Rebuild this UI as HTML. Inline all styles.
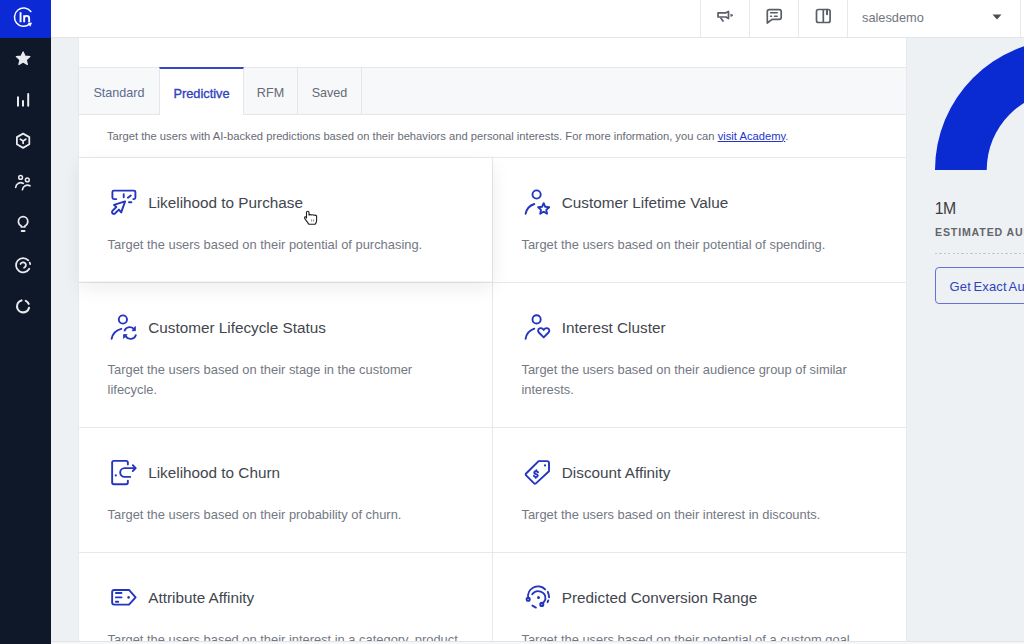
<!DOCTYPE html>
<html><head><meta charset="utf-8">
<style>
*{box-sizing:border-box;margin:0;padding:0}
html,body{width:1024px;height:644px;overflow:hidden;background:#eef1f3;font-family:"Liberation Sans",sans-serif}
.abs{position:absolute}
#side{left:0;top:0;width:51px;height:644px;background:#0f1828}
#logo{left:0;top:0;width:51px;height:38px;background:#0b2ad6}
#top{left:51px;top:0;width:973px;height:38px;background:#fff;border-bottom:1px solid #e3e5e9}
.vb{top:0;width:1px;height:37px;background:#e6e8eb}
#panel{left:79px;top:38px;width:827px;height:603px;background:#fff;overflow:hidden}
#pl{left:78px;top:38px;width:1px;height:603px;background:#e6e8eb}
#pr{left:906px;top:38px;width:1px;height:603px;background:#e8eaed}
#tabs{left:0;top:29px;width:827px;height:48px;background:#f7f8fa;border-top:1px solid #e4e6ea;border-bottom:1px solid #e4e6ea}
.tab{top:0;height:46px;font-size:12.6px;color:#5c6b8c;line-height:51px;text-align:center;border-right:1px solid #e4e6ea}
.tab.act{background:#fff;color:#3142bd;font-weight:normal;font-size:12.8px;-webkit-text-stroke:0.35px #3142bd;border-top:2px solid #3848c4;top:-1px;height:48px;line-height:50px;border-left:1px solid #e4e6ea}
#info{left:28px;top:90.8px;font-size:11.2px;line-height:14px;color:#676b74;white-space:nowrap}
#info a{color:#2235c8;text-decoration:underline}
.hl{left:0;width:827px;height:1px;background:#e6e8eb}
.vl{left:413px;width:1px;background:#e6e8eb}
.ic{position:absolute}
.ttl{position:absolute;font-size:15.3px;line-height:20px;color:#42464e;white-space:nowrap}
.dsc{position:absolute;font-size:12.9px;color:#737883;line-height:20px;white-space:nowrap}
#hov{left:0;top:120px;width:413px;height:123px;background:#fff;box-shadow:0 7px 18px rgba(20,30,50,0.08)}
#right{left:907px;top:38px;width:117px;height:603px;background:#eef1f3}
#bot{left:51px;top:641px;width:973px;height:3px;background:#f6f7f9;border-top:1px solid #e0e3e7}
</style></head><body>
<div id="side" class="abs"></div>
<div id="logo" class="abs">
<svg width="51" height="38" viewBox="0 0 51 38" style="position:absolute;left:0;top:0">
<path d="M30.85 11.55 A9.15 9.15 0 1 0 29.5 24.2" fill="none" stroke="#fff" stroke-width="1.5" stroke-linecap="round"/>
<path d="M28.3 23.1 L31.6 22.9 L30.2 26.3 Z" fill="#fff" stroke="#fff" stroke-width="0.6" stroke-linejoin="round"/>
<path d="M20.55 12.2 V22.2 M24.15 22.2 V15.2 M24.15 18.4 A2.5 2.5 0 0 1 29.15 18.4 V22.2" fill="none" stroke="#fff" stroke-width="1.9"/>
</svg>
</div>
<svg class="abs" style="left:0;top:38px" width="51" height="290" viewBox="0 38 51 290">
<g fill="none" stroke="#e8eaf0" stroke-linecap="round" stroke-linejoin="round">
<path fill="#e8eaf0" stroke-width="1.2" d="M23.1 51.9 L25.05 56.05 L29.9 56.6 L26.3 59.75 L27.3 64.5 L23.1 62.1 L18.9 64.5 L19.9 59.75 L16.3 56.6 L21.15 56.05 Z"/>
<path stroke-width="2" d="M18 97.2 V105.8 M23 101.1 V105.8 M28.2 94 V105.8"/>
<path stroke-width="1.8" d="M23.1 133.6 L29.3 137.1 V144.3 L23.1 147.9 L16.9 144.3 V137.1 Z"/>
<path stroke-width="1.8" d="M20.4 139.3 L23.1 140.9 L25.8 139.3 M23.1 140.9 V143.3"/>
<circle stroke-width="1.5" cx="20.6" cy="177.45" r="1.9"/>
<circle stroke-width="1.5" cx="27.3" cy="179.9" r="1.9"/>
<path stroke-width="1.7" d="M15.75 187.3 A5 5 0 0 1 23.3 183.4 M22.45 189.75 A5 5 0 0 1 30.0 185.85"/>
<path stroke-width="1.7" d="M21.3 227 V226 Q18.4 224.3 18.4 221.4 A4.7 4.7 0 0 1 27.8 221.4 Q27.8 224.3 24.9 226 V227 Z"/>
<path stroke-width="1.8" d="M21.6 231 H24.6"/>
<path stroke-width="1.8" d="M28.33 260.40 A7.1 7.1 0 1 0 29.27 268.71 M29.73 262.66 A7.1 7.1 0 0 1 30.10 264.04"/>
<path stroke-width="1.8" d="M20.54 263.96 A2.8 2.8 0 1 1 24.06 267.73"/>
<path stroke-width="2.1" d="M21.52 300.41 A6.1 6.1 0 1 0 28.99 307.88 M25.77 300.82 A6.1 6.1 0 0 1 28.69 303.86"/>
</g>
</svg>
<div id="top" class="abs">
<div class="vb abs" style="left:649px"></div>
<div class="vb abs" style="left:698px"></div>
<div class="vb abs" style="left:747px"></div>
<div class="vb abs" style="left:796px"></div>
<div class="vb abs" style="left:969px"></div>
<div class="abs" style="left:811px;top:10px;font-size:12.8px;color:#72757d">salesdemo</div>
<svg class="abs" style="left:649px;top:0" width="200" height="37" viewBox="700 0 200 37">
<g fill="none" stroke="#5a5e68" stroke-width="1.7" stroke-linecap="round" stroke-linejoin="round">
<path d="M718 12.8 H726 L728.5 11.5 V18.6 L726 17 H718 Z"/>
<path d="M721 18.2 L723 21"/>
<path d="M731.2 14.3 L733 15.3 L731.2 16.3 Z" fill="#5a5e68" stroke-width="0.8"/>
<path d="M767.3 23 V11.7 Q767.3 9.7 769.3 9.7 H779.2 Q781.2 9.7 781.2 11.7 V17.3 Q781.2 19.3 779.2 19.3 H772 Z"/>
<path d="M770.6 12.7 H777.2 M770.6 16.3 H771.5 M774.5 16.3 H777.2" stroke-width="1.6"/>
<path d="M816.5 11.5 Q816.5 9.5 818.5 9.5 H823.3 V22.5 H818.5 Q816.5 22.5 816.5 20.5 Z M823.3 9.5 H828.1 Q830.1 9.5 830.1 11.5 V20.5 Q830.1 22.5 828.1 22.5 H823.3"/>
<path d="M827 9.8 V14.3" stroke-width="2"/>
</g>
</svg>
<svg class="abs" style="left:941px;top:14px" width="10" height="6"><path d="M0.5 0.5 L9.5 0.5 L5 5.5Z" fill="#4a4e57"/></svg>
</div>
<div class="abs" style="left:79px;top:158px;width:413px;height:123px;background:#fff;box-shadow:0 7px 18px rgba(20,30,50,0.07)"></div>
<div id="panel" class="abs">
<div id="tabs" class="abs">
<div class="tab abs" style="left:0;width:81px">Standard</div>
<div class="tab abs act" style="left:80px;width:85px">Predictive</div>
<div class="tab abs" style="left:165px;width:54px;color:#666a73">RFM</div>
<div class="tab abs" style="left:219px;width:64px;color:#666a73">Saved</div>
</div>
<div id="info" class="abs">Target the users with AI-backed predictions based on their behaviors and personal interests. For more information, you can <a>visit Academy</a>.</div>
<div class="hl abs" style="top:119px"></div>
<div class="hl abs" style="top:244px"></div>
<div class="hl abs" style="top:389px"></div>
<div class="hl abs" style="top:514px"></div>
<div class="vl abs" style="top:119px;height:500px"></div>
<div id="hov" class="abs"></div>
<svg class="ic" style="left:27px;top:147px" width="36" height="35" viewBox="0 0 36 35"><path fill="none" stroke="#2435c0" stroke-width="1.9" stroke-linecap="round" stroke-linejoin="round" d="M10.3 14.1 H7.9 Q6.4 14.1 6.4 12.6 V7.1 Q6.4 5.6 7.9 5.6 H27.9 Q29.4 5.6 29.4 7.1 V12.6 Q29.4 14.1 27.9 14.1 H27.3"/>
<path fill="none" stroke="#2435c0" stroke-width="1.9" stroke-linecap="round" stroke-linejoin="round" d="M17.7 9.3 V12.2 M21.9 12.7 L24.8 10.5 M23 17.3 H25.4"/>
<path fill="none" stroke="#2435c0" stroke-width="1.9" stroke-linecap="round" stroke-linejoin="round" d="M19.1 16.4 L8.0 19.9 L10.3 22.0 L6.2 26.1 Q5.5 27.6 6.9 28.7 Q8 29.3 8.9 28.5 L12.9 24.6 L15.2 27.4 Z"/></svg>
<div class="ttl" style="left:69.2px;top:154.6px">Likelihood to Purchase</div>
<div class="dsc" style="left:28.6px;top:196.5px">Target the users based on their potential of purchasing.</div>
<svg class="ic" style="left:441px;top:147px" width="36" height="35" viewBox="0 0 36 35"><circle fill="none" stroke="#2435c0" stroke-width="1.9" stroke-linecap="round" stroke-linejoin="round" cx="16.6" cy="9.5" r="4.1"/><path fill="none" stroke="#2435c0" stroke-width="1.9" stroke-linecap="round" stroke-linejoin="round" d="M5.6 28.8 A13 13 0 0 1 14.3 19.0"/><path fill="none" stroke="#2435c0" stroke-width="1.9" stroke-linecap="round" stroke-linejoin="round" d="M23.65 18.20 L25.27 21.78 L29.17 22.21 L26.27 24.85 L27.06 28.69 L23.65 26.75 L20.24 28.69 L21.03 24.85 L18.13 22.21 L22.03 21.78 Z"/></svg>
<div class="ttl" style="left:482.8px;top:154.6px">Customer Lifetime Value</div>
<div class="dsc" style="left:442.5px;top:196.5px">Target the users based on their potential of spending.</div>
<svg class="ic" style="left:27px;top:272px" width="36" height="35" viewBox="0 0 36 35"><circle fill="none" stroke="#2435c0" stroke-width="1.9" stroke-linecap="round" stroke-linejoin="round" cx="16.9" cy="9.5" r="4.1"/><path fill="none" stroke="#2435c0" stroke-width="1.9" stroke-linecap="round" stroke-linejoin="round" d="M5.6 28.8 A13 13 0 0 1 15.3 18.8"/><path fill="none" stroke="#2435c0" stroke-width="1.9" stroke-linecap="round" stroke-linejoin="round" d="M18.6 20.5 A5.6 5.6 0 0 1 28.4 19.6"/>
<path fill="#2435c0" stroke="#2435c0" stroke-width="0.8" stroke-linejoin="round" d="M29.4 16.4 L29.4 20.7 L26.1 20.7 Z"/>
<path fill="none" stroke="#2435c0" stroke-width="1.9" stroke-linecap="round" stroke-linejoin="round" d="M29.8 25.2 A5.6 5.6 0 0 1 20.0 26.6"/>
<path fill="#2435c0" stroke="#2435c0" stroke-width="0.8" stroke-linejoin="round" d="M17.5 24.6 L17.5 28.4 L21.1 24.6 Z"/></svg>
<div class="ttl" style="left:69.2px;top:279.6px">Customer Lifecycle Status</div>
<div class="dsc" style="left:28.6px;top:321.5px">Target the users based on their stage in the customer<br>lifecycle.</div>
<svg class="ic" style="left:441px;top:272px" width="36" height="35" viewBox="0 0 36 35"><circle fill="none" stroke="#2435c0" stroke-width="1.9" stroke-linecap="round" stroke-linejoin="round" cx="16.6" cy="9.4" r="4.1"/><path fill="none" stroke="#2435c0" stroke-width="1.9" stroke-linecap="round" stroke-linejoin="round" d="M5.6 28.8 A13 13 0 0 1 14.3 18.7"/><path fill="none" stroke="#2435c0" stroke-width="1.9" stroke-linecap="round" stroke-linejoin="round" d="M23.7 27.4 L18.9 22.5 Q17.4 20.8 18.5 19.2 Q19.9 17.6 22 18.3 Q23.2 18.8 23.7 20 Q24.2 18.8 25.4 18.3 Q27.5 17.6 28.9 19.2 Q30 20.8 28.5 22.5 Z"/></svg>
<div class="ttl" style="left:482.8px;top:279.6px">Interest Cluster</div>
<div class="dsc" style="left:442.5px;top:321.5px">Target the users based on their audience group of similar<br>interests.</div>
<svg class="ic" style="left:27px;top:417px" width="36" height="35" viewBox="0 0 36 35"><path fill="none" stroke="#2435c0" stroke-width="1.9" stroke-linecap="round" stroke-linejoin="round" d="M21.85 9.5 V7.6 Q21.85 5.85 20.1 5.85 H7.9 Q6.15 5.85 6.15 7.6 V27.5 Q6.15 29.25 7.9 29.25 H20.1 Q21.85 29.25 21.85 27.5 V25.6"/>
<circle cx="9.8" cy="20.4" r="1.1" fill="#2435c0"/>
<path fill="none" stroke="#2435c0" stroke-width="1.9" stroke-linecap="round" stroke-linejoin="round" d="M24.2 21.9 H18.6 A4.4 4.4 0 0 1 18.6 13.1 H29.6 M26.8 10.2 L29.7 13.1 L26.8 16.0"/></svg>
<div class="ttl" style="left:69.2px;top:424.6px">Likelihood to Churn</div>
<div class="dsc" style="left:28.6px;top:466.5px">Target the users based on their probability of churn.</div>
<svg class="ic" style="left:441px;top:417px" width="36" height="35" viewBox="0 0 36 35"><path fill="none" stroke="#2435c0" stroke-width="1.9" stroke-linecap="round" stroke-linejoin="round" d="M18.6 6.1 H27 Q29 6.1 29 8.1 V16.2 L15.9 28.4 Q15 29.3 14.1 28.4 L6.1 20.3 Q5.2 19.4 6.1 18.5 Z"/>
<circle cx="25" cy="10.4" r="1.1" fill="#2435c0"/>
<g transform="translate(16 19.1) rotate(5)"><path fill="none" stroke="#2435c0" stroke-width="1.9" stroke-linecap="round" stroke-linejoin="round" stroke-width="1.8" d="M1.9 -1.9 Q1.5 -2.85 0 -2.85 Q-1.9 -2.85 -1.9 -1.45 Q-1.9 -0.25 0 0 Q1.95 0.25 1.95 1.5 Q1.95 2.85 0 2.85 Q-1.6 2.85 -2.0 1.9 M0 -2.85 V-3.8 M0 2.85 V3.8"/></g></svg>
<div class="ttl" style="left:482.8px;top:424.6px">Discount Affinity</div>
<div class="dsc" style="left:442.5px;top:466.5px">Target the users based on their interest in discounts.</div>
<svg class="ic" style="left:27px;top:542px" width="36" height="35" viewBox="0 0 36 35"><path fill="none" stroke="#2435c0" stroke-width="1.9" stroke-linecap="round" stroke-linejoin="round" d="M8.2 9.95 H23 L29.6 17.3 L23 24.65 H8.2 Q6.15 24.65 6.15 22.6 V12 Q6.15 9.95 8.2 9.95 Z"/>
<path fill="none" stroke="#2435c0" stroke-width="1.9" stroke-linecap="round" stroke-linejoin="round" d="M9.9 13.05 H15.5 M9.9 17.4 H15.5 M9.9 21.75 H12.2"/>
<circle cx="22.6" cy="17.4" r="1.3" fill="#2435c0"/></svg>
<div class="ttl" style="left:69.2px;top:549.6px">Attribute Affinity</div>
<div class="dsc" style="left:28.6px;top:591.5px">Target the users based on their interest in a category, product</div>
<svg class="ic" style="left:441px;top:542px" width="36" height="35" viewBox="0 0 36 35"><path fill="none" stroke="#2435c0" stroke-width="1.9" stroke-linecap="round" stroke-linejoin="round" d="M8.2 18.2 A10 10 0 0 1 25.2 9.4"/>
<path fill="none" stroke="#2435c0" stroke-width="1.9" stroke-linecap="round" stroke-linejoin="round" d="M12.2 14.3 A7.3 7.3 0 0 1 25.4 19.3 Q24.6 22 22 23.8"/>
<circle fill="none" stroke="#2435c0" stroke-width="1.9" stroke-linecap="round" stroke-linejoin="round" cx="8.2" cy="19.2" r="1.6"/>
<circle fill="none" stroke="#2435c0" stroke-width="1.9" stroke-linecap="round" stroke-linejoin="round" cx="21.8" cy="24.4" r="1.6"/>
<circle cx="18.5" cy="17.4" r="1.5" fill="#2435c0"/>
<path fill="none" stroke="#2435c0" stroke-width="1.9" stroke-linecap="round" stroke-linejoin="round" d="M27.8 11.8 Q28.9 14.4 29.1 17.2 M28.3 20.4 L27.6 22.2 M12.4 25.6 L15.9 27.6"/></svg>
<div class="ttl" style="left:482.8px;top:549.6px">Predicted Conversion Range</div>
<div class="dsc" style="left:442.5px;top:591.5px">Target the users based on their potential of a custom goal</div>
</div>
<svg class="abs" style="left:298px;top:204px" width="28" height="28" viewBox="0 0 28 28">
<path d="M8.5 14 V8.3 Q8.5 7.2 9.75 7.2 Q11 7.2 11 8.3 V11 Q12.5 10.2 13.5 11 Q15 10.3 16 11.3 Q17.5 10.8 18.6 11.8 V16.5 Q18.6 18.5 17 20.3 H11 L6.8 14.6 Q6.2 13 7.3 12.7 Q8 12.6 8.5 13.4 Z" fill="#fff" stroke="#1e1e1e" stroke-width="1.1" stroke-linejoin="round"/>
<path d="M13.6 15.3 V17.6 M15.6 15.3 V17.6" stroke="#777" stroke-width="0.8"/>
</svg>
<div id="pl" class="abs"></div>
<div id="pr" class="abs"></div>
<div id="right" class="abs">
<svg class="abs" style="left:0;top:0" width="117" height="140" viewBox="907 38 117 140">
<path fill="#0a2ad2" d="M935 170 A130.5 130.5 0 0 1 1196 170 L1144.3 170 A78.8 78.8 0 0 0 986.7 170 Z"/>
</svg>
<div class="abs" style="left:27.8px;top:161.6px;font-size:15.8px;line-height:18px;letter-spacing:-0.7px;color:#3a3d44">1M</div>
<div class="abs" style="left:28px;top:187.3px;font-size:10.6px;line-height:14px;font-weight:bold;letter-spacing:0.85px;color:#62656c;white-space:nowrap">ESTIMATED AUDIENCE</div>
<div class="abs" style="left:28px;top:215px;width:120px;height:1px;background:repeating-linear-gradient(90deg,#c2c5cb 0 2.3px,transparent 2.3px 4.4px)"></div>
<div class="abs" style="left:28px;top:229px;width:140px;height:37px;border:1px solid #6474d0;border-radius:4px;background:transparent"></div>
<div class="abs" style="left:42.5px;top:240.5px;font-size:13px;line-height:16px;letter-spacing:0.15px;word-spacing:-1.2px;color:#2f43be;white-space:nowrap">Get Exact Audience</div>
</div>
<div id="bot" class="abs"></div>
</body></html>
